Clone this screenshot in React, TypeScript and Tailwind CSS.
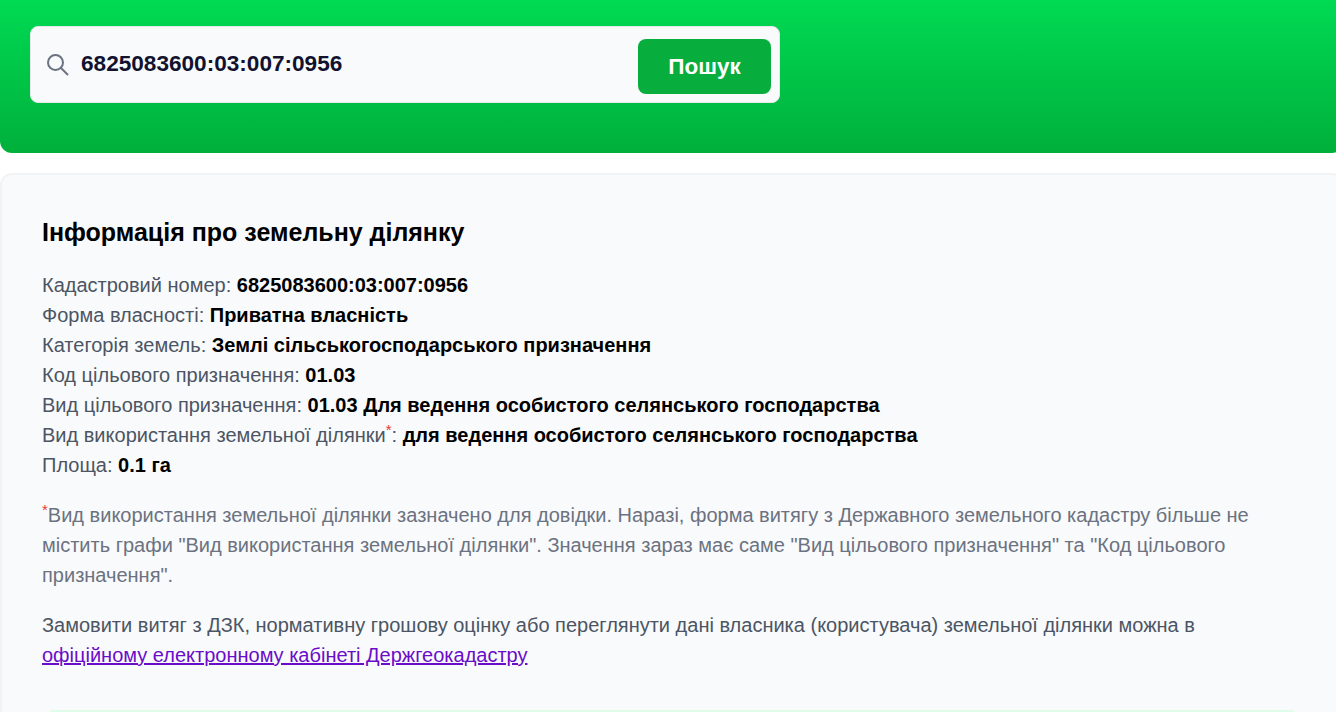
const rows: { label: string; value: string; star?: boolean }[] = [
  { label: "Кадастровий номер", value: "6825083600:03:007:0956" },
  { label: "Форма власності", value: "Приватна власність" },
  { label: "Категорія земель", value: "Землі сільськогосподарського призначення" },
  { label: "Код цільового призначення", value: "01.03" },
  { label: "Вид цільового призначення", value: "01.03 Для ведення особистого селянського господарства" },
  { label: "Вид використання земельної ділянки", value: "для ведення особистого селянського господарства", star: true },
  { label: "Площа", value: "0.1 га" },
]

function Star() {
  return <sup className="text-[15px] leading-none text-[#e53935]">*</sup>
}

export default function App() {
  return (
    <div className="h-[712px] w-[1336px] overflow-hidden bg-white font-['Liberation_Sans',Arial,sans-serif]">
      <div className="w-[1344px]">
        <header className="h-[153px] rounded-b-xl bg-gradient-to-b from-[#00da53] to-[#00b03b] px-[30px] pt-[26px]">
          <div className="flex h-[77px] w-[750px] items-center rounded-lg border border-[#e5e7eb] bg-[#f8fafc] pl-[16px] pr-2">
            {/* лупа */}
            <svg width="22" height="22" viewBox="0 0 22 22" fill="none" stroke="#6b7280" strokeWidth="2" className="shrink-0">
              <circle cx="8.5" cy="8.5" r="7.5" />
              <line x1="14" y1="14" x2="21" y2="21" />
            </svg>
            <span className="ml-3 flex-1 pb-px text-[22.6px] font-bold text-[#12122e]">6825083600:03:007:0956</span>
            <button className="mt-1 h-[55px] w-[133px] rounded-lg bg-[#07ae3e] text-[22.5px] font-bold text-white">Пошук</button>
          </div>
        </header>

        <main className="mt-5 h-[600px] rounded-xl border-2 border-[#f1f3f5] bg-[#f9fafc] px-10 pt-[41px]">
          <h2 className="text-[25px] font-bold leading-[32px] text-black">Інформація про земельну ділянку</h2>

          <div className="mt-[22px] text-[20px] leading-[30px] text-[#4b5563]">
            {rows.map((r) => (
              <div key={r.label}>
                {r.label}
                {r.star && <Star />}: <b className="text-black">{r.value}</b>
              </div>
            ))}
          </div>

          <p className="mt-5 w-[1250px] text-[20px] leading-[30px] text-[#6b7280]">
            <Star />
            Вид використання земельної ділянки зазначено для довідки. Наразі, форма витягу з Державного земельного кадастру більше не містить графи "Вид використання земельної ділянки". Значення зараз має саме "Вид цільового призначення" та "Код цільового призначення".
          </p>

          <p className="mt-5 w-[1250px] text-[20px] leading-[30px] text-[#4b5563]">
            Замовити витяг з ДЗК, нормативну грошову оцінку або переглянути дані власника (користувача) земельної ділянки можна в{" "}
            <a href="#" className="text-[#6a0dc9] underline">офіційному електронному кабінеті Держгеокадастру</a>
          </p>

          <div className="mt-10 ml-[4px] h-20 w-[1252px] rounded-lg bg-[#dffce9]" />
        </main>
      </div>
    </div>
  )
}
